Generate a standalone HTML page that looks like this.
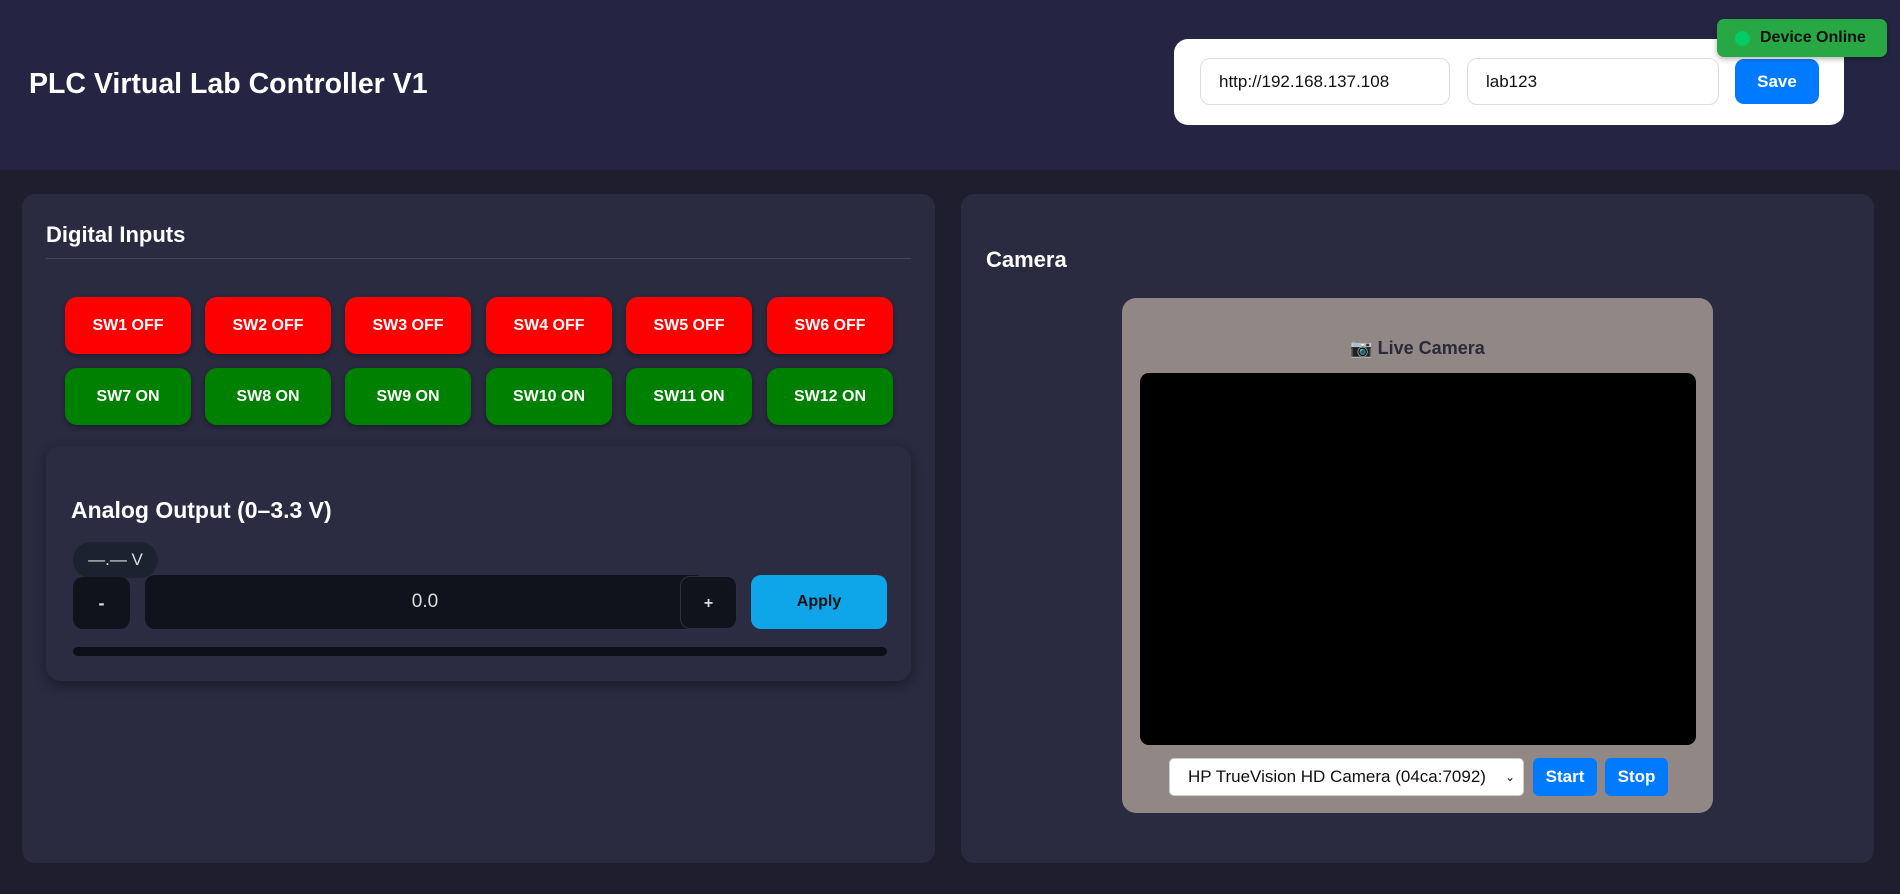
<!DOCTYPE html>
<html><head><meta charset="utf-8"><style>
*{box-sizing:border-box;margin:0;padding:0}
body{width:1900px;height:894px;background:#1e1e2e;font-family:"Liberation Sans",Arial,sans-serif;position:relative;overflow:hidden}
.abs{position:absolute}
header{position:absolute;left:0;top:0;width:1900px;height:170px;background:#252543}
.title{left:29px;top:68px;font-size:28.5px;font-weight:bold;color:#fff}
.cfg{left:1174px;top:39px;width:670px;height:86px;background:#fff;border-radius:14px}
.inp{height:47px;border:1px solid #ddd;border-radius:10px;background:#fff;font-size:17px;color:#111;padding-left:18px;line-height:45px}
.save{left:1735px;top:59px;width:84px;height:45px;background:#007bff;border-radius:9px;color:#fff;font-weight:bold;font-size:17px;text-align:center;line-height:45px}
.badge{left:1717px;top:19px;width:170px;height:38px;background:#28a745;border-radius:7px;color:#111;font-weight:bold;font-size:16px;line-height:38px;padding-left:43px;box-shadow:0 2px 6px rgba(0,0,0,.3)}
.badge:before{content:"";position:absolute;left:18px;top:12px;width:15px;height:15px;border-radius:50%;background:#00cc66}
.panel{top:194px;height:669px;background:#2a2a40;border-radius:13px}
.h{font-size:21px;font-weight:bold;color:#fff}
.sw{width:126px;height:57px;border-radius:12px;color:#fff;font-weight:bold;font-size:16px;text-align:center;line-height:57px;box-shadow:0 2px 5px rgba(0,0,0,.3)}
.r{background:#f00}.g{background:#008000}
.card{left:46px;top:446px;width:865px;height:235px;background:#2b2b42;border-radius:14px;box-shadow:0 4px 12px rgba(0,0,0,.35)}
.dark{background:#0f131b;border-radius:10px;color:#ddd;text-align:center}
</style></head><body>
<header></header>
<div class="abs title">PLC Virtual Lab Controller V1</div>
<div class="abs cfg"></div>
<div class="abs inp" style="left:1200px;top:58px;width:250px">http://192.168.137.108</div>
<div class="abs inp" style="left:1467px;top:58px;width:252px">lab123</div>
<div class="abs save">Save</div>
<div class="abs badge">Device Online</div>

<div class="abs panel" style="left:22px;width:913px"></div>
<div class="abs h" style="left:46px;top:222px;font-size:22px">Digital Inputs</div>
<div class="abs" style="left:46px;top:258px;width:865px;height:1px;background:#44445a"></div>
<div class="abs sw r" style="left:65px;top:297px">SW1 OFF</div>
<div class="abs sw r" style="left:205px;top:297px">SW2 OFF</div>
<div class="abs sw r" style="left:345px;top:297px">SW3 OFF</div>
<div class="abs sw r" style="left:486px;top:297px">SW4 OFF</div>
<div class="abs sw r" style="left:626px;top:297px">SW5 OFF</div>
<div class="abs sw r" style="left:767px;top:297px">SW6 OFF</div>
<div class="abs sw g" style="left:65px;top:368px">SW7 ON</div>
<div class="abs sw g" style="left:205px;top:368px">SW8 ON</div>
<div class="abs sw g" style="left:345px;top:368px">SW9 ON</div>
<div class="abs sw g" style="left:486px;top:368px">SW10 ON</div>
<div class="abs sw g" style="left:626px;top:368px">SW11 ON</div>
<div class="abs sw g" style="left:767px;top:368px">SW12 ON</div>

<div class="abs card"></div>
<div class="abs h" style="left:71px;top:497px;font-size:23px">Analog Output (0–3.3 V)</div>
<div class="abs" style="left:73px;top:542px;width:85px;height:36px;background:#1c2330;border-radius:18px;color:#ddd;font-size:17px;line-height:36px;text-align:center">—.— V</div>
<div class="abs dark" style="left:145px;top:575px;width:560px;height:54px;line-height:54px;font-size:19px">0.0</div>
<div class="abs dark" style="left:73px;top:577px;width:57px;height:52px;line-height:52px;font-size:18px;font-weight:bold">-</div>
<div class="abs dark" style="left:680px;top:576px;width:57px;height:53px;line-height:53px;font-size:16px;font-weight:bold;border:1px solid #2a3040">+</div>
<div class="abs" style="left:751px;top:575px;width:136px;height:54px;background:#0ea5e9;border-radius:10px;color:#111;font-weight:bold;font-size:16px;text-align:center;line-height:54px">Apply</div>
<div class="abs" style="left:73px;top:647px;width:814px;height:9px;background:#0c0f15;border-radius:5px"></div>

<div class="abs panel" style="left:961px;width:913px"></div>
<div class="abs h" style="left:986px;top:247px;font-size:22px">Camera</div>
<div class="abs" style="left:1122px;top:298px;width:591px;height:515px;background:#918886;border-radius:14px"></div>
<div class="abs" style="left:1122px;top:338px;width:591px;text-align:center;font-weight:bold;font-size:18px;color:#2a2a3a">📷 Live Camera</div>
<div class="abs" style="left:1140px;top:373px;width:556px;height:372px;background:#000;border-radius:9px"></div>
<div class="abs" style="left:1169px;top:758px;width:355px;height:38px;background:#fff;border:1px solid #ccc;border-radius:5px;font-size:17px;color:#111;line-height:36px;padding-left:18px">HP TrueVision HD Camera (04ca:7092) <span style="position:absolute;right:8px;font-size:12px">⌄</span></div>
<div class="abs" style="left:1533px;top:758px;width:64px;height:38px;background:#007bff;border-radius:6px;color:#fff;font-weight:bold;font-size:17px;text-align:center;line-height:38px">Start</div>
<div class="abs" style="left:1605px;top:758px;width:63px;height:38px;background:#007bff;border-radius:6px;color:#fff;font-weight:bold;font-size:17px;text-align:center;line-height:38px">Stop</div>
</body></html>
